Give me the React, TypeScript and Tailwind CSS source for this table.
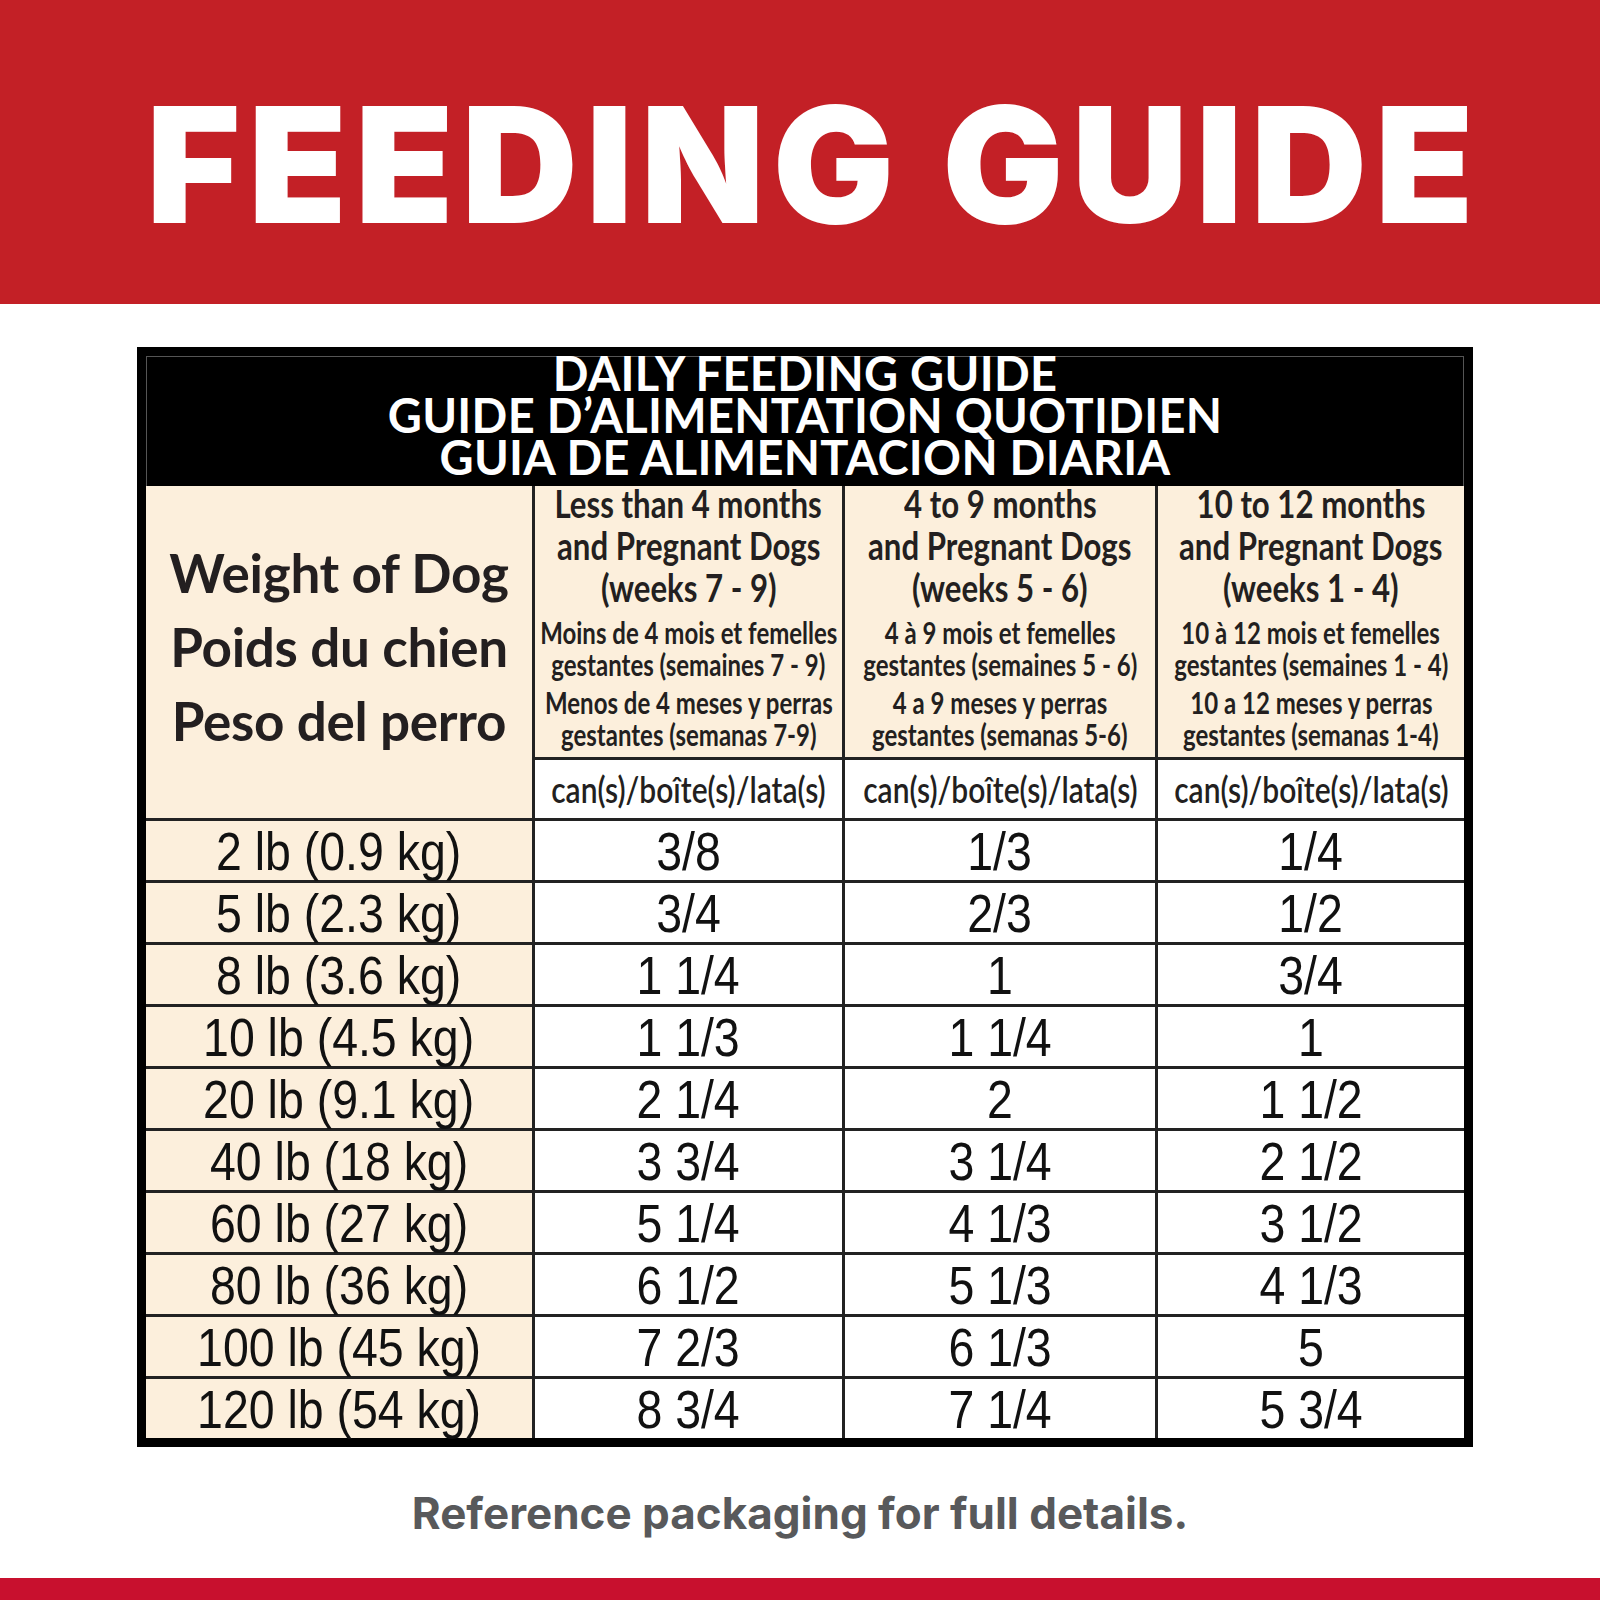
const rows: string[][] = [
  ["2 lb (0.9 kg)", "3/8", "1/3", "1/4"],
  ["5 lb (2.3 kg)", "3/4", "2/3", "1/2"],
  ["8 lb (3.6 kg)", "1 1/4", "1", "3/4"],
  ["10 lb (4.5 kg)", "1 1/3", "1 1/4", "1"],
  ["20 lb (9.1 kg)", "2 1/4", "2", "1 1/2"],
  ["40 lb (18 kg)", "3 3/4", "3 1/4", "2 1/2"],
  ["60 lb (27 kg)", "5 1/4", "4 1/3", "3 1/2"],
  ["80 lb (36 kg)", "6 1/2", "5 1/3", "4 1/3"],
  ["100 lb (45 kg)", "7 2/3", "6 1/3", "5"],
  ["120 lb (54 kg)", "8 3/4", "7 1/4", "5 3/4"],
];

const stages = [
  {
    en: ["Less than 4 months", "and Pregnant Dogs", "(weeks 7 - 9)"],
    fr: ["Moins de 4 mois et femelles", "gestantes (semaines 7 - 9)"],
    es: ["Menos de 4 meses y perras", "gestantes (semanas 7-9)"],
  },
  {
    en: ["4 to 9 months", "and Pregnant Dogs", "(weeks 5 - 6)"],
    fr: ["4 à 9 mois et femelles", "gestantes (semaines 5 - 6)"],
    es: ["4 a 9 meses y perras", "gestantes (semanas 5-6)"],
  },
  {
    en: ["10 to 12 months", "and Pregnant Dogs", "(weeks 1 - 4)"],
    fr: ["10 à 12 mois et femelles", "gestantes (semaines 1 - 4)"],
    es: ["10 a 12 meses y perras", "gestantes (semanas 1-4)"],
  },
];

// condensed look: the printed label uses narrow faces we don't have
const Narrow = ({ children, className = "" }: { children: React.ReactNode; className?: string }) => (
  <span className={`inline-block whitespace-nowrap origin-center ${className}`}>{children}</span>
);

const StageHeader = ({ stage }: { stage: (typeof stages)[number] }) => (
  <div className="flex flex-col items-center bg-[#fcefdc] text-[#231f20] font-['Lato',sans-serif]">
    <div className="w-full -mt-[4px]">
      {stage.en.map((line) => (
        <div key={line} className="flex justify-center w-full h-[42px] text-[39px] leading-[42px] font-bold">
          <Narrow className="scale-x-[0.8]">{line}</Narrow>
        </div>
      ))}
    </div>
    <div className="w-full mt-[8px]">
      {stage.fr.map((line) => (
        <div key={line} className="flex justify-center w-full h-[32px] text-[30px] leading-[32px] font-bold">
          <Narrow className="scale-x-[0.8]">{line}</Narrow>
        </div>
      ))}
    </div>
    <div className="w-full mt-[6px]">
      {stage.es.map((line) => (
        <div key={line} className="flex justify-center w-full h-[32px] text-[30px] leading-[32px] font-bold">
          <Narrow className="scale-x-[0.8]">{line}</Narrow>
        </div>
      ))}
    </div>
  </div>
);

export default function App() {
  return (
    <div className="w-[1600px] h-[1600px] bg-white flex flex-col">
      {/* Red banner */}
      <header className="h-[304px] shrink-0 bg-[#c32026] flex items-center justify-center pt-6 pl-[28px]">
        <h1 className="text-white font-['Inter',sans-serif] font-black text-[161px] leading-none tracking-[8px]">
          FEEDING GUIDE
        </h1>
      </header>

      {/* Table */}
      <div className="mt-[43px] ml-[137px] w-[1336px] border-[9px] border-black bg-black">
        <div className="h-[130px] border-t border-x border-[#555] bg-black text-white text-center font-['Lato',sans-serif] font-bold text-[47px] tracking-[0.3px]">
          <div className="leading-[32px]">DAILY FEEDING GUIDE</div>
          <div className="leading-[52px]">GUIDE D’ALIMENTATION QUOTIDIEN</div>
          <div className="leading-[32px]">GUIA DE ALIMENTACION DIARIA</div>
        </div>

        <div className="grid grid-cols-[386px_307px_310px_306px] grid-rows-[271px_58px_repeat(10,59px)] gap-[3px] bg-[#222]">
          <div className="row-span-2 bg-[#fcefdc] flex flex-col items-center justify-center pb-[10px] text-[#231f20] font-['Lato',sans-serif] font-bold text-[53px] leading-[74px] tracking-[-0.3px]">
            <div>Weight of Dog</div>
            <div>Poids du chien</div>
            <div>Peso del perro</div>
          </div>
          {stages.map((s, i) => (
            <StageHeader key={i} stage={s} />
          ))}
          {stages.map((_, i) => (
            <div key={i} className="bg-white flex items-center justify-center text-[#231f20] font-['Lato',sans-serif] font-semibold text-[37px]">
              <Narrow className="scale-x-[0.81]">can(s)/boîte(s)/lata(s)</Narrow>
            </div>
          ))}
          {rows.map((r) =>
            r.map((cell, j) => (
              <div
                key={r[0] + j}
                className={`${j === 0 ? "bg-[#fcefdc]" : "bg-white"} flex items-center justify-center text-[#111] font-['Liberation_Sans',sans-serif] text-[54px] leading-none`}
              >
                <Narrow className="scale-x-[0.86]">{cell}</Narrow>
              </div>
            ))
          )}
        </div>
      </div>

      <p className="mt-[44px] text-center text-[#58595b] font-['Inter',sans-serif] font-bold text-[44px] leading-none">
        Reference packaging for full details.
      </p>

      <div className="mt-auto h-[22px] bg-[#c8102e]" />
    </div>
  );
}
